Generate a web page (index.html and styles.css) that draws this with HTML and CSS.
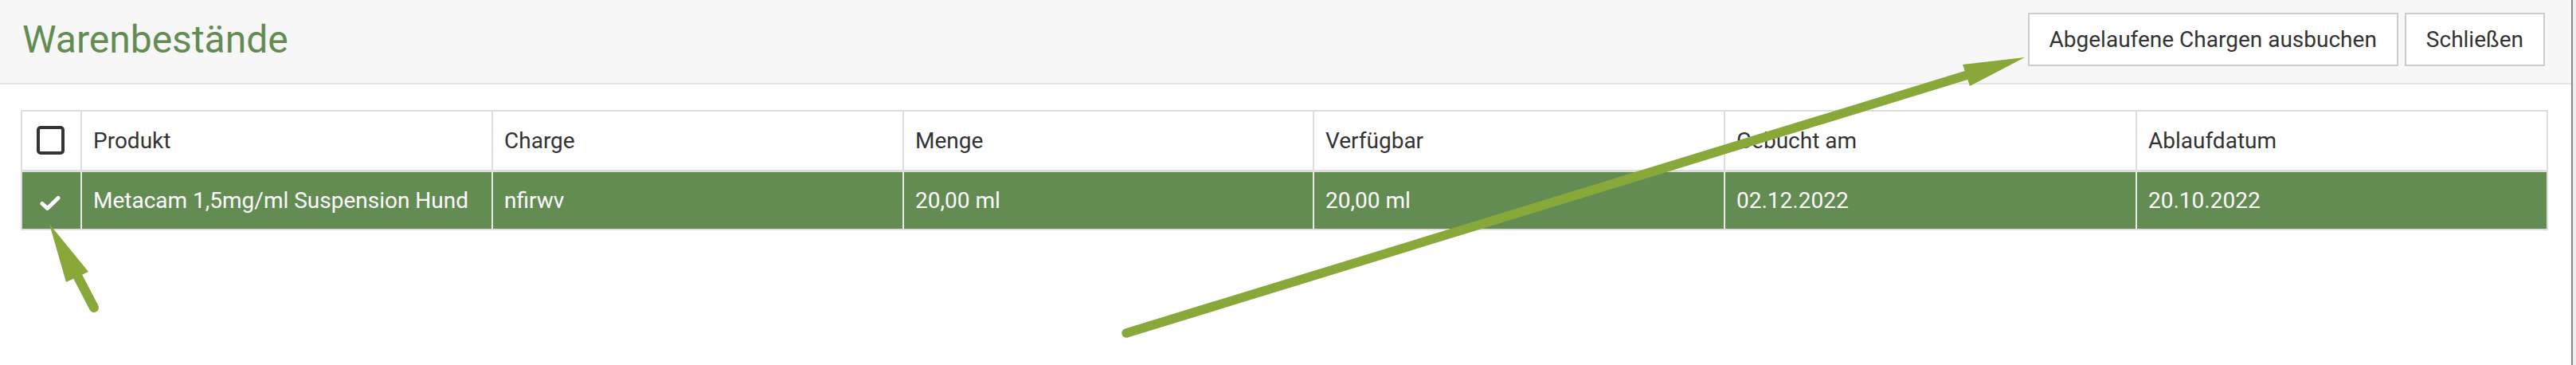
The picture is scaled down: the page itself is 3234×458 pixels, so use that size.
FILE: index.html
```html
<!DOCTYPE html>
<html lang="de">
<head>
<meta charset="utf-8">
<title>Warenbestände</title>
<link rel="stylesheet" href="styles.css">
</head>
<body>
<div class="page">
  <header class="topbar">
    <h1 class="title">Warenbestände</h1>
    <div class="actions">
      <button class="btn">Abgelaufene Chargen ausbuchen</button>
      <button class="btn">Schließen</button>
    </div>
  </header>
  <main class="content">
    <table class="stock">
      <thead>
        <tr>
          <th class="c-check"><span class="box"></span></th>
          <th class="c-prod">Produkt</th>
          <th class="c-charge">Charge</th>
          <th class="c-menge">Menge</th>
          <th class="c-verf">Verfügbar</th>
          <th class="c-geb">Gebucht am</th>
          <th class="c-abl">Ablaufdatum</th>
        </tr>
      </thead>
      <tbody>
        <tr class="selected">
          <td class="c-check"><svg class="tick" width="26" height="20" viewBox="0 0 26 20"><path d="M3 10.5 L9.5 16.5 L23 3.5" fill="none" stroke="#ffffff" stroke-width="5" stroke-linejoin="round" stroke-linecap="round"/></svg></td>
          <td>Metacam 1,5mg/ml Suspension Hund</td>
          <td>nfirwv</td>
          <td>20,00 ml</td>
          <td>20,00 ml</td>
          <td>02.12.2022</td>
          <td>20.10.2022</td>
        </tr>
      </tbody>
    </table>
  </main>
</div>
<svg class="annot" width="3234" height="458" viewBox="0 0 3234 458">
  <line x1="118" y1="386" x2="95" y2="342" stroke="#89a83a" stroke-width="12" stroke-linecap="round"/>
  <polygon points="62,281 83,354 111,341" fill="#89a83a"/>
  <line x1="1414" y1="418" x2="2470" y2="94" stroke="#89a83a" stroke-width="11.5" stroke-linecap="round"/>
  <polygon points="2542,72 2464,81 2473,108" fill="#89a83a"/>
</svg>
</body>
</html>
```
FILE: styles.css
```css
html {
  background: #efefef;
}
body {
  margin: 0;
  position: relative;
  width: 3234px;
  height: 458px;
  overflow: hidden;
  font-family: Roboto, "Noto Sans", Arial, sans-serif;
}
.page {
  width: 3228px;
  height: 458px;
  background: #ffffff;
  border-right: 2px solid #8a8a8a;
}
.topbar {
  height: 104px;
  box-sizing: border-box;
  background: #f7f7f7;
  border-bottom: 2px solid #e6e6e6;
  display: flex;
  align-items: center;
  justify-content: space-between;
  padding: 0 33px 5px 28px;
  height: 106px;
}
.title {
  margin: 0;
  font-weight: 400;
  font-size: 48px;
  line-height: 56px;
  color: #638c52;
}
.actions {
  display: flex;
  gap: 8px;
}
.btn {
  height: 67px;
  box-sizing: border-box;
  background: #ffffff;
  border: 2px solid #cccccc;
  border-radius: 0;
  padding: 0 25px;
  font-family: Roboto, "Noto Sans", Arial, sans-serif;
  font-size: 28px;
  color: #333333;
}
.content {
  padding: 32px 0 0 26px;
}
.stock {
  table-layout: fixed;
  width: 3173px;
  border: 2px solid #dddddd;
  border-spacing: 0;
  font-size: 28px;
}
.stock th,
.stock td {
  box-sizing: border-box;
  padding: 0 0 0 14px;
  text-align: left;
  vertical-align: middle;
  white-space: nowrap;
  border-right: 2px solid #dddddd;
}
.stock th:last-child,
.stock td:last-child {
  border-right: 0;
}
.stock th {
  height: 76px;
  font-weight: 400;
  color: #333333;
  border-bottom: 3px solid #dddddd;
}
.stock td {
  height: 71px;
  color: #ffffff;
}
.stock .c-check { width: 75px; padding: 0; text-align: center; }
.stock .c-prod { width: 516px; }
.stock .c-charge { width: 516px; }
.stock .c-menge { width: 515px; }
.stock .c-verf { width: 516px; }
.stock .c-geb { width: 517px; }
.stock .c-abl { width: 514px; }
.box {
  display: inline-block;
  width: 35px;
  height: 36px;
  box-sizing: border-box;
  border: 4px solid #333333;
  border-radius: 5px;
  background: #ffffff;
  vertical-align: middle;
  margin: -2px 3px 0 0;
}
.selected td {
  background: #638c52;
  border-right-color: #e4e9e1;
}
.tick {
  display: inline-block;
  vertical-align: middle;
  margin: 2px 4px 0 0;
}
.annot {
  position: absolute;
  top: 0;
  left: 0;
  pointer-events: none;
}
```
